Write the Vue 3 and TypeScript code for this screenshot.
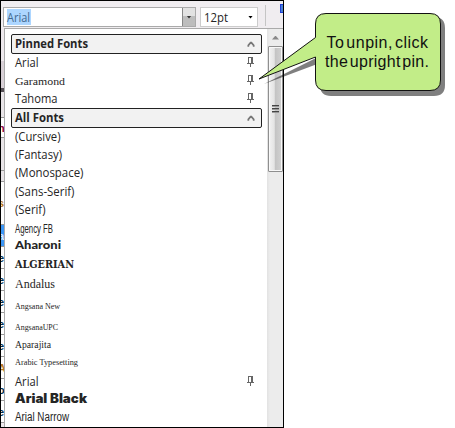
<script setup lang="ts">
interface FontRow {
  name: string
  width: number
  height: number
  face: string
  baseline: number
  pinned?: boolean
}
interface FontGroup {
  title: string
  width: number
  rows: FontRow[]
}

const groups: FontGroup[] = [
  {
    title: 'Pinned Fonts',
    width: 73,
    rows: [
      { name: 'Arial', width: 23.5, height: 18, face: 'ui', baseline: 13, pinned: true },
      { name: 'Garamond', width: 50, height: 18, face: 'garamond', baseline: 12.5, pinned: true },
      { name: 'Tahoma', width: 42.5, height: 18, face: 'ui', baseline: 13, pinned: true },
    ],
  },
  {
    title: 'All Fonts',
    width: 49,
    rows: [
      { name: '(Cursive)', width: 45.5, height: 18, face: 'ui', baseline: 13 },
      { name: '(Fantasy)', width: 47, height: 18, face: 'ui', baseline: 13 },
      { name: '(Monospace)', width: 68.5, height: 18, face: 'ui', baseline: 13 },
      { name: '(Sans-Serif)', width: 59.5, height: 19, face: 'ui', baseline: 14 },
      { name: '(Serif)', width: 30.5, height: 18, face: 'ui', baseline: 13 },
      { name: 'Agency FB', width: 38, height: 18, face: 'agency', baseline: 14 },
      { name: 'Aharoni', width: 46, height: 17, face: 'aharoni', baseline: 12 },
      { name: 'ALGERIAN', width: 59, height: 20, face: 'algerian', baseline: 14 },
      { name: 'Andalus', width: 40, height: 21, face: 'andalus', baseline: 14 },
      { name: 'Angsana New', width: 45, height: 23, face: 'angsana', baseline: 14 },
      { name: 'AngsanaUPC', width: 43, height: 19, face: 'angsana', baseline: 12 },
      { name: 'Aparajita', width: 36, height: 16, face: 'aparajita', baseline: 11 },
      { name: 'Arabic Typesetting', width: 63, height: 18, face: 'typesetting', baseline: 12 },
      { name: 'Arial', width: 23.5, height: 19, face: 'ui', baseline: 15, pinned: true },
      { name: 'Arial Black', width: 72, height: 18, face: 'black', baseline: 13 },
      { name: 'Arial Narrow', width: 54, height: 18, face: 'narrow', baseline: 13 },
    ],
  },
]

const gutter = [
  { text: '', height: 31, kind: 'dark' },
  { text: '', height: 26, kind: 'shade' },
  { text: 'n', height: 20, kind: 'red' },
  { text: '', height: 33, kind: 'shade' },
  { text: '', height: 11, kind: 'shade' },
  { text: 's', height: 43, kind: 'gold' },
  { text: 'a', height: 22, kind: 'selected' },
  { text: 'e', height: 22, kind: 'plain' },
  { text: 'e', height: 22, kind: 'plain' },
  { text: 'e', height: 22, kind: 'plain' },
  { text: 'e', height: 22, kind: 'plain' },
  { text: 'e', height: 22, kind: 'plain' },
  { text: 'A', height: 22, kind: 'gold' },
  { text: 'o', height: 22, kind: 'plain' },
  { text: 'e', height: 22, kind: 'plain' },
]
</script>

<template>
  <main class="page">
    <section class="window">
      <header class="toolbar">
        <div class="font-box">
          <span class="selection">
            <svg class="label" width="24" height="16"><text class="ui" x="0" y="13" textLength="23" lengthAdjust="spacingAndGlyphs">Arial</text></svg>
          </span>
          <span class="drop"><i class="down"></i></span>
        </div>
        <div class="size-box">
          <svg class="label" width="26" height="18"><text class="ui" x="0" y="14" textLength="24" lengthAdjust="spacingAndGlyphs">12pt</text></svg>
          <i class="down dark"></i>
        </div>
        <span class="divider"></span>
        <span class="tool"></span>
      </header>

      <div class="body">
        <aside class="gutter">
          <div v-for="(g, i) in gutter" :key="i" class="cell" :class="g.kind" :style="{ height: g.height + 'px' }">
            <span>{{ g.text }}</span>
          </div>
        </aside>

        <div class="list">
          <template v-for="group in groups" :key="group.title">
            <div class="heading">
              <svg class="label" width="120" height="18">
                <text class="title" x="0" y="13" :textLength="group.width" lengthAdjust="spacingAndGlyphs">{{ group.title }}</text>
              </svg>
              <svg class="chevron" width="8" height="7" viewBox="0 0 8 7">
                <path d="M1.300 5.700V4.400L3.600 1.700h.8L6.700 4.400v1.300" />
              </svg>
            </div>
            <div v-for="row in group.rows" :key="row.name" class="row" :style="{ height: row.height + 'px' }">
              <svg class="label" width="120" :height="row.height">
                <text :class="row.face" x="0" :y="row.baseline" :textLength="row.width" lengthAdjust="spacingAndGlyphs">{{ row.name }}</text>
              </svg>
              <svg v-if="row.pinned" class="pin" :class="{ low: row.height > 18 }" width="7" height="10" viewBox="0 0 7 10" shape-rendering="crispEdges">
                <path d="M1 0h5v6h1v1H4v3H3V7H0V6h1zM2 1v5h2V1z" fill-rule="evenodd" />
              </svg>
            </div>
          </template>
        </div>

        <div class="scrollbar">
          <div class="arrow"><i class="up"></i></div>
          <div class="thumb"><i></i><i></i><i></i></div>
        </div>
      </div>
    </section>

    <svg class="callout" width="197" height="100" viewBox="258 0 197 100">
      <path class="shadow" d="M264 84L320 56V28Q320 17 331 17H434Q445 17 445 28V85Q445 96 434 96H331Q320 96 320 85V63z" />
      <path class="bubble" d="M259 79L315.500 37.500V24Q315.500 13.500 326 13.500H430Q440.500 13.500 440.500 24V80Q440.500 90.500 430 90.500H326Q315.500 90.500 315.500 80V57z" />
      <text x="326.500" y="48" textLength="101.500" lengthAdjust="spacing">To unpin, click</text>
      <text x="325" y="67" textLength="104" lengthAdjust="spacing">the upright pin.</text>
    </svg>
  </main>
</template>

<style>
body {
  margin: 0;
  background: #fff;
}
</style>

<style scoped>
.page {
  position: relative;
  width: 455px;
  height: 428px;
  overflow: hidden;
  background: #fff;
}
.window {
  box-sizing: border-box;
  display: flex;
  flex-direction: column;
  width: 284px;
  height: 428px;
  border: 1px solid #000;
  background: #fff;
}
.toolbar {
  box-sizing: border-box;
  display: flex;
  flex: none;
  height: 27px;
  padding: 6px 0 0 2px;
  background: #f0edf0;
}
.font-box {
  box-sizing: border-box;
  display: flex;
  justify-content: space-between;
  width: 193px;
  height: 20px;
  border: 1px solid #aaa;
  background: #fff;
}
.selection {
  display: block;
  width: 24px;
  height: 16px;
  margin: 1px 0 0 3px;
  background: #add6ff;
}
.selection .label {
  fill: #42688f;
}
.drop {
  display: flex;
  align-items: center;
  justify-content: center;
  width: 12px;
  border-left: 1px solid #888;
  background: linear-gradient(#e2e2e2 0 42%, #bdbdbd 43%);
}
.down {
  width: 5px;
  height: 3px;
  background: #333;
  clip-path: polygon(0 0, 100% 0, 50% 100%);
}
.down.dark {
  background: #000;
  margin-right: 4px;
}
.size-box {
  box-sizing: border-box;
  display: flex;
  align-items: center;
  justify-content: space-between;
  width: 58px;
  height: 20px;
  margin-left: 4px;
  padding-left: 3px;
  border: 1px solid #ccc;
  background: #fff;
}
.divider {
  width: 1px;
  height: 21px;
  margin: -2px 14px 0 7px;
  background: #c5c5c5;
}
.tool {
  box-sizing: border-box;
  width: 3px;
  height: 9px;
  margin-top: -3px;
  border: 1px solid #1d3fd6;
  border-right: 0;
  background: #4a80d5;
}
.body {
  display: flex;
  flex: 1;
  min-height: 0;
}
.gutter {
  display: flex;
  flex-direction: column;
  flex: none;
  width: 3px;
  padding-top: 33px;
  overflow: hidden;
  border-right: 1px solid #aaa;
  background: #eee9ed;
}
.cell {
  box-sizing: border-box;
  flex: none;
  display: flex;
  align-items: center;
  overflow: hidden;
  border-bottom: 1px solid #999;
  background: #fff;
  color: #003050;
  font: bold 11px/12px "Liberation Sans", sans-serif;
}
.cell span {
  margin-left: -3px;
}
.cell.dark {
  border-bottom: 4px solid #554f55;
  background: #d8d0d6;
}
.cell.shade {
  background: #e9e5e8;
}
.cell.red {
  color: #8e0040;
}
.cell.gold {
  color: #b87820;
}
.cell.selected {
  background: #3c96f5;
  color: #d8ecff;
}
.list {
  box-sizing: border-box;
  flex: none;
  width: 262px;
  padding: 5px 4px 0 6px;
  border-top: 1px solid #aaa;
}
.heading {
  box-sizing: border-box;
  display: flex;
  align-items: center;
  justify-content: space-between;
  width: 251px;
  height: 20px;
  padding: 0 6px 0 3px;
  border: 1px solid #222;
  border-radius: 2px;
  background: #f2f2f2;
}
.row {
  display: flex;
  justify-content: space-between;
  width: 240px;
  padding-left: 4px;
}
.label {
  display: block;
  flex: none;
  overflow: visible;
  fill: #252525;
}
.chevron path {
  fill: none;
  stroke: #777;
  stroke-width: 1.7;
}
.pin {
  margin: 3px 1px 0 0;
  fill: #666;
}
.pin.low {
  margin-top: 5px;
}
.title {
  font: 700 12px "Open Sans", sans-serif;
}
.ui {
  font: 12.5px "Open Sans", sans-serif;
}
.garamond {
  font: 11px "Liberation Serif", serif;
}
.agency {
  font: 12px "Liberation Sans", sans-serif;
}
.aharoni {
  font: 900 11.5px Lato, sans-serif;
}
.algerian {
  font: 700 11px "DejaVu Serif", serif;
}
.andalus {
  font: 11.5px "Liberation Serif", serif;
}
.angsana {
  font: 8px "Liberation Serif", serif;
}
.aparajita {
  font: 10px "Liberation Serif", serif;
}
.typesetting {
  font: 9px "Liberation Serif", serif;
}
.black {
  font: 900 12.5px Inter, sans-serif;
}
.narrow {
  font: 12px "Liberation Sans", sans-serif;
}
.scrollbar {
  box-sizing: border-box;
  flex: 1;
  padding: 0 0 0 1px;
  border-top: 1px solid #aaa;
  background: linear-gradient(90deg, #e2e2e2, #ececec 3px);
}
.arrow {
  display: flex;
  align-items: center;
  justify-content: center;
  height: 17px;
}
.up {
  width: 7px;
  height: 4px;
  background: #888;
  clip-path: polygon(50% 0, 100% 100%, 0 100%);
}
.thumb {
  box-sizing: border-box;
  display: flex;
  flex-direction: column;
  align-items: center;
  justify-content: center;
  gap: 1px;
  width: 15px;
  height: 126px;
  border: 1px solid #8f8f8f;
  border-radius: 1px;
  box-shadow: inset 0 0 0 1px #f8f8f8;
  background: linear-gradient(90deg, #f2f2f2, #e4e4e4 40%, #c4c4c4 50%, #d2d2d2);
}
.thumb i {
  width: 7px;
  height: 2px;
  background: linear-gradient(#444 50%, #999 50%);
}
.callout {
  position: absolute;
  left: 258px;
  top: 0;
}
.shadow {
  fill: #000;
  fill-opacity: 0.5;
}
.bubble {
  fill: #c2ed88;
  stroke: #111;
}
.callout text {
  font: 16px "Liberation Sans", sans-serif;
  word-spacing: -3px;
  fill: #111;
}
</style>
